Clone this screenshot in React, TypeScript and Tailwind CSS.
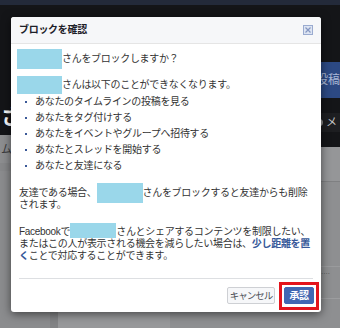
import React from "react";

function Redact({ top, h }: { top: number; h: number }) {
  return (
    <span className="relative inline-block w-[46px] h-[12px] align-top">
      <span
        className="absolute left-0 w-[46px] bg-[#9ad7ea]"
        style={{ top: `${top}px`, height: `${h}px` }}
      />
    </span>
  );
}

const items = [
  "あなたのタイムラインの投稿を見る",
  "あなたをタグ付けする",
  "あなたをイベントやグループへ招待する",
  "あなたとスレッドを開始する",
  "あなたと友達になる",
];

export default function App() {
  return (
    <div className="relative w-[340px] h-[328px] overflow-hidden bg-[#8d8e90] font-['Liberation_Sans','Noto_Sans_CJK_JP',sans-serif]">
      {/* background page (dimmed) */}
      <div className="flex flex-col h-full">
        <div className="h-[5px] bg-[#232a3a]" />
        <div className="flex flex-1">
          <div className="w-[170px] flex flex-col">
            <div className="h-[130px] bg-[#141518] flex items-end pb-[6px] pl-[1px]">
              <span className="text-white text-[21px] leading-[24px] font-bold">さ</span>
            </div>
            <div className="h-[28px] flex items-center pl-[1px] text-[#3a3b3d] text-[11px]">ムラ</div>
            <div className="h-[8px] bg-[#87888a]" />
            <div className="flex-1 flex">
              <div className="w-[50px] bg-[#8b8c8e]" />
              <div className="w-[8px] bg-[#828385]" />
              <div className="flex-1 flex flex-col bg-[#97989a]">
                <div className="h-[136px]" />
                <div className="h-px bg-[#8a8b8d]" />
              </div>
            </div>
          </div>
          <div className="w-[170px] flex flex-col">
            <div className="h-[57px] bg-[#141518]" />
            <div className="h-[36px] bg-[#2c4983] flex items-center justify-end text-[#aab8d6] text-[12px]">
              投稿
            </div>
            <div className="h-[15px] bg-[#141518]" />
            <div className="h-[19px] bg-[#1d1e21] flex items-center justify-end gap-[3px] pr-[3px] text-[#c8c8c8] text-[11px]">
              <span className="w-[7px] h-[7px] rounded-full bg-[#8a8a8a]" />
              <span>メ</span>
            </div>
            <div className="h-[15px] bg-[#141518]" />
            <div className="h-[34px] bg-[#959698]" />
            <div className="h-px bg-[#7f8082]" />
            <div className="flex-1 flex flex-col bg-[#8e8f91]">
              <div className="h-[84px]" />
              <div className="h-px bg-[#9a9b9d]" />
              <div className="h-[9px] flex items-center justify-end pr-[10px] text-[#555] text-[8px] leading-[8px]">
                ....
              </div>
              <div className="h-[22px]" />
              <div className="h-px bg-[#9c9d9f]" />
            </div>
          </div>
        </div>
      </div>

      {/* dialog */}
      <div className="absolute left-[11px] top-[17px] w-[310px] h-[295px] bg-white rounded-[3px] shadow-[0_2px_10px_rgba(0,0,0,0.55)] overflow-hidden flex flex-col">
        <div className="h-[27px] shrink-0 bg-[#f6f7f9] border-b border-[#e5e5e5] flex items-center justify-between pl-[8px] pr-[8px]">
          <span className="text-[10px] tracking-[-0.3px] font-bold text-[#1d2129] leading-[12px]">
            ブロックを確認
          </span>
          <svg width="10" height="10" viewBox="0 0 10 10">
            <rect x="0.5" y="0.5" width="9" height="9" fill="#dde4f2" stroke="#9aabd0" />
            <path d="M2.5 2.5 L7.5 7.5 M7.5 2.5 L2.5 7.5" stroke="#8597c2" strokeWidth="1.2" />
          </svg>
        </div>

        <div className="px-[8px] pt-[5px] text-[10px] tracking-[-0.3px] text-[#333] whitespace-nowrap">
          <div className="flex items-center h-[20px] -ml-[2px]">
            <span className="w-[45px] h-[20px] bg-[#9ad7ea]" />
            <span className="leading-[12px]">さんをブロックしますか？</span>
          </div>
          <div className="flex items-center h-[18px] mt-[7px] -ml-[2px]">
            <span className="w-[45px] h-[18px] bg-[#9ad7ea]" />
            <span className="leading-[12px]">さんは以下のことができなくなります。</span>
          </div>
          <ul className="pl-[6px]">
            {items.map((t) => (
              <li key={t} className="flex items-center h-[16px] gap-[8px]">
                <span className="w-[2px] h-[2px] bg-[#3b5998]" />
                <span className="leading-[12px]">{t}</span>
              </li>
            ))}
          </ul>
          <p className="mt-[13px] leading-[12px]">
            友達である場合、
            <Redact top={-4} h={20} />
            さんをブロックすると友達からも削除
            <br />
            されます。
          </p>
          <p className="mt-[15px] leading-[12px]">
            Facebookで
            <Redact top={-3} h={15} />
            さんとシェアするコンテンツを制限したい、
            <br />
            またはこの人が表示される機会を減らしたい場合は、
            <span className="text-[#365899] font-bold">
              少し距離を置
              <br />く
            </span>
            ことで対応することができます。
          </p>
        </div>

        <div className="mt-[16px] mx-[8px] h-px bg-[#dddfe2]" />
        <div className="flex-1 flex items-center justify-end gap-[4px] pr-[2px]">
          <div className="w-[48px] h-[17px] flex items-center justify-center border border-[#ced0d4] bg-[#f6f7f9] rounded-[2px] text-[9.5px] tracking-[-1px] text-[#4b4f56] leading-[12px]">
            キャンセル
          </div>
          <div className="w-[40px] h-[28px] border-[3px] border-[#e3141c] flex items-center justify-center">
            <div className="w-[30px] h-[17px] flex items-center justify-center bg-[#4267b2] border border-[#4267b2] rounded-[2px] text-white font-bold text-[10px] tracking-[-0.5px] leading-[12px]">
              承認
            </div>
          </div>
        </div>
      </div>
    </div>
  );
}
